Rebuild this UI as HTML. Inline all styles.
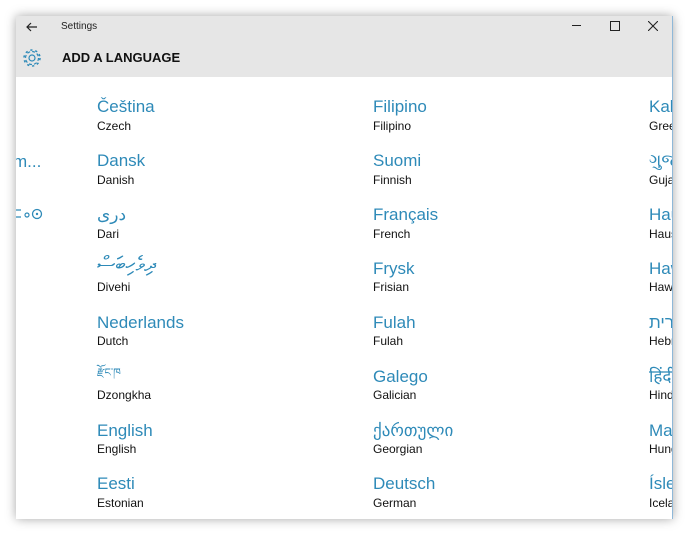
<!DOCTYPE html>
<html><head><meta charset="utf-8"><style>
body{margin:0;width:689px;height:535px;background:#fff;position:relative;overflow:hidden;font-family:"Liberation Sans","Noto Sans CJK SC",sans-serif}
.win{position:absolute;left:16px;top:16px;width:656px;height:503px;background:#fff;box-shadow:0 0 10px rgba(0,0,0,.35);overflow:hidden;border-right:1px solid #8fb8d8}
.hdr{position:absolute;left:0;top:0;width:656px;height:61px;background:#e6e6e6}
.t{position:absolute;white-space:nowrap}
.n{font-size:17px;color:#2e8ab8;line-height:20px}
.s{font-size:12px;color:#111;line-height:14px}
</style></head><body>
<div class="win">
<div class="hdr">
<svg class="t" style="left:9px;top:4px" width="14" height="14" viewBox="0 0 14 14"><path d="M12 7H2M6 3L2 7l4 4" stroke="#222" stroke-width="1.2" fill="none"/></svg>
<div class="t" style="left:45px;top:5px;font-size:10px;color:#222">Settings</div>
<div class="t" style="left:556px;top:9px;width:9px;height:1px;background:#222"></div>
<div class="t" style="left:594px;top:5px;width:8px;height:8px;border:1px solid #222"></div>
<svg class="t" style="left:632px;top:5px" width="10" height="10" viewBox="0 0 10 10"><path d="M0 0L10 10M10 0L0 10" stroke="#222" stroke-width="1.1"/></svg>
<svg class="t" style="left:6px;top:32px" width="20" height="20" viewBox="0 0 20 20"><circle cx="10" cy="10" r="3" fill="none" stroke="#2e8ab8" stroke-width="1.2"/><circle cx="10" cy="10" r="6.5" fill="none" stroke="#2e8ab8" stroke-width="1.2" stroke-dasharray="3 2.1"/><circle cx="10" cy="10" r="8" fill="none" stroke="#2e8ab8" stroke-width="1.5" stroke-dasharray="2.2 2.9"/></svg>
<div class="t" style="left:46px;top:34px;font-size:13px;font-weight:bold;color:#111">ADD A LANGUAGE</div>
</div>
<div class="t n" style="left:-3px;top:136px">m...</div>
<svg class="t" style="left:0;top:191px" width="30" height="14" viewBox="0 0 30 14"><path d="M0 3H5M0 10H5" stroke="#2e8ab8" stroke-width="1.3"/><circle cx="11" cy="8" r="2" fill="none" stroke="#2e8ab8" stroke-width="1.2"/><circle cx="21" cy="7" r="4.5" fill="none" stroke="#2e8ab8" stroke-width="1.3"/><circle cx="21" cy="7" r="1.2" fill="#2e8ab8"/></svg>

<div class="t n" style="left:81px;top:81px">Čeština</div><div class="t s" style="left:81px;top:103px">Czech</div>
<div class="t n" style="left:81px;top:135px">Dansk</div><div class="t s" style="left:81px;top:157px">Danish</div>
<div class="t n" style="left:81px;top:189px">دری</div><div class="t s" style="left:81px;top:211px">Dari</div>
<div class="t n" style="left:81px;top:239px;font-size:21px">ދިވެހިބަސް</div><div class="t s" style="left:81px;top:264px">Divehi</div>
<div class="t n" style="left:81px;top:297px">Nederlands</div><div class="t s" style="left:81px;top:318px">Dutch</div>
<div class="t n" style="left:81px;top:347px;font-size:11px">རྫོང་ཁ</div><div class="t s" style="left:81px;top:372px">Dzongkha</div>
<div class="t n" style="left:81px;top:405px">English</div><div class="t s" style="left:81px;top:426px">English</div>
<div class="t n" style="left:81px;top:458px">Eesti</div><div class="t s" style="left:81px;top:480px">Estonian</div>

<div class="t n" style="left:357px;top:81px">Filipino</div><div class="t s" style="left:357px;top:103px">Filipino</div>
<div class="t n" style="left:357px;top:135px">Suomi</div><div class="t s" style="left:357px;top:157px">Finnish</div>
<div class="t n" style="left:357px;top:189px">Français</div><div class="t s" style="left:357px;top:211px">French</div>
<div class="t n" style="left:357px;top:243px">Frysk</div><div class="t s" style="left:357px;top:264px">Frisian</div>
<div class="t n" style="left:357px;top:297px">Fulah</div><div class="t s" style="left:357px;top:318px">Fulah</div>
<div class="t n" style="left:357px;top:351px">Galego</div><div class="t s" style="left:357px;top:372px">Galician</div>
<div class="t n" style="left:357px;top:405px">ქართული</div><div class="t s" style="left:357px;top:426px">Georgian</div>
<div class="t n" style="left:357px;top:458px">Deutsch</div><div class="t s" style="left:357px;top:480px">German</div>

<div class="t n" style="left:633px;top:81px">Kalaallisut</div><div class="t s" style="left:633px;top:103px">Greenlandic</div>
<div class="t n" style="left:633px;top:135px">ગુજરાતી</div><div class="t s" style="left:633px;top:157px">Gujarati</div>
<div class="t n" style="left:633px;top:189px">Hausa</div><div class="t s" style="left:633px;top:211px">Hausa</div>
<div class="t n" style="left:633px;top:243px">Hawaiʻi</div><div class="t s" style="left:633px;top:264px">Hawaiian</div>
<div class="t n" style="left:633px;top:297px;direction:ltr;unicode-bidi:bidi-override">תירבע</div><div class="t s" style="left:633px;top:318px">Hebrew</div>
<div class="t n" style="left:633px;top:351px">हिंदी</div><div class="t s" style="left:633px;top:372px">Hindi</div>
<div class="t n" style="left:633px;top:405px">Magyar</div><div class="t s" style="left:633px;top:426px">Hungarian</div>
<div class="t n" style="left:633px;top:458px">Íslenska</div><div class="t s" style="left:633px;top:480px">Icelandic</div>
</div>
</body></html>
